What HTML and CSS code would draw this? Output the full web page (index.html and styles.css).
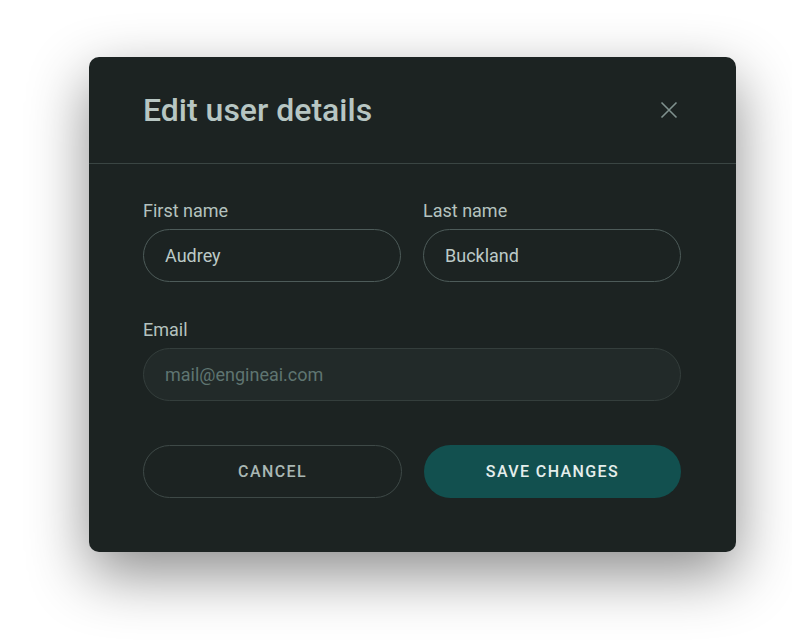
FILE: index.html
```html
<!DOCTYPE html>
<html>
	<head>
		<title>Edit user details</title>
		<link rel="stylesheet" href="styles.css">
	</head>
	<body>
		<div class="dialog">
			<div class="dialog-head">
				<h1>Edit user details</h1>
				<button class="close" aria-label="Close">
					<svg width="18" height="18" viewBox="0 0 18 18"><path d="M1.5 1.5L16.5 16.5M16.5 1.5L1.5 16.5" stroke="#7f918e" stroke-width="1.6" fill="none"/></svg>
				</button>
			</div>
			<form class="dialog-body">
				<div class="row">
					<label class="field">First name<input type="text" value="Audrey"/></label>
					<label class="field">Last name<input type="text" value="Buckland"/></label>
				</div>
				<div class="row">
					<label class="field">Email<input class="muted" type="text" placeholder="mail@engineai.com"/></label>
				</div>
				<div class="row actions">
					<button type="button" class="btn btn-cancel">Cancel</button>
					<button type="button" class="btn btn-save">Save changes</button>
				</div>
			</form>
		</div>
	</body>
</html>
```

FILE: styles.css
```css
html, body {padding: 0px; margin: 0px; background: #fff;}
body {font-family: Roboto, "Liberation Sans", sans-serif; padding: 57px 0 90px 89px;}
.dialog {width: 647px; background: #1c2322; border-radius: 10px; box-shadow: 0 22px 60px rgba(0,0,0,0.45);}
.dialog-head {display: flex; align-items: center; justify-content: space-between; height: 107px; padding: 0 54px; border-bottom: 1px solid #3a4543; box-sizing: border-box;}
.dialog-head h1 {margin: 0; font-size: 32px; font-weight: 500; color: #b7c6c3;}
.close {background: none; border: none; padding: 0; margin-right: 4px; display: flex; cursor: pointer;}
.dialog-body {padding: 36px 55px 54px 54px; display: flex; flex-direction: column; gap: 37px;}
.row {display: flex; gap: 22px;}
.field {flex: 1; min-width: 0; display: flex; flex-direction: column; gap: 8px; font-size: 18px; color: #b4c2bf;}
.field input {width: 100%; min-width: 0; height: 53px; box-sizing: border-box; border: 1px solid #4d5b59; border-radius: 27px; background: transparent; padding: 0 21px; font-family: inherit; font-size: 18px; color: #bccac7; outline: none;}
.field input.muted {background: #222a29; border-color: #343e3c;}
.field input::placeholder {color: #5f7571;}
.actions {margin-top: 7px;}
.btn {flex: 1; height: 53px; border-radius: 27px; font-family: inherit; font-size: 16px; font-weight: 500; letter-spacing: 1.4px; text-transform: uppercase; cursor: pointer;}
.btn-cancel {background: transparent; border: 1px solid #3e4947; color: #a9b7b4;}
.btn-save {background: #12504f; border: none; color: #e4eeec;}
```
